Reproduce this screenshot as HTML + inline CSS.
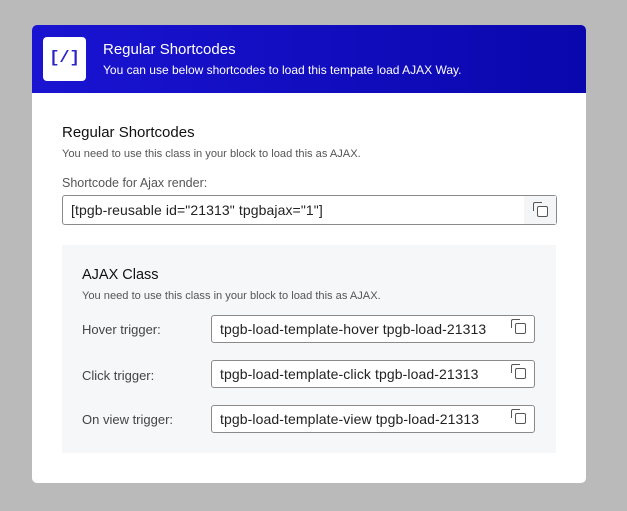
<!DOCTYPE html><html><head><style>
body{margin:0;width:627px;height:511px;background:#b9bab9;font-family:"Liberation Sans",sans-serif;position:relative;overflow:hidden}
.m{position:absolute;left:32px;top:25px;width:554px;height:458px;background:#fff;border-radius:5px;overflow:hidden}
.h{height:68px;background:linear-gradient(90deg,#1a14d2,#0a07ad);position:relative;color:#fff}
.logo{position:absolute;left:11px;top:12px;width:43px;height:44px;background:#fff;border-radius:4px;color:#2a23c8;font:bold 17px "Liberation Mono",monospace;text-align:center;line-height:44px}
.t1{position:absolute;left:71px;top:16px;font-size:15px}
.t2{position:absolute;left:71px;top:38px;font-size:12px}
.a{position:absolute}
.in{position:absolute;border:1px solid #8a8a8a;border-radius:3px;background:#fff;font-size:14px;color:#222;box-sizing:border-box;padding-left:8px;line-height:26px;letter-spacing:0.1px}
.cp{position:absolute;right:8px;top:7px;width:9px;height:9px;border:1.5px solid #555;border-radius:2px;background:#fff}
.cp:before{content:"";position:absolute;left:-5px;top:-5px;width:8px;height:8px;border-left:1.5px solid #555;border-top:1.5px solid #555;border-radius:2px 0 0 0}
.lb{position:absolute;font-size:13px;color:#444}
.s{font-size:11.1px;color:#555}
</style></head><body>
<div class="m">
<div class="h"><div class="logo">[/]</div><div class="t1">Regular Shortcodes</div><div class="t2">You can use below shortcodes to load this tempate load AJAX Way.</div></div>
<div class="a" style="left:30px;top:99px;font-size:15px;color:#111">Regular Shortcodes</div>
<div class="a s" style="left:30px;top:123px">You need to use this class in your block to load this as AJAX.</div>
<div class="a" style="left:30px;top:151px;font-size:12.5px;color:#555">Shortcode for Ajax render:</div>
<div class="in" style="left:30px;top:170px;width:495px;height:30px;line-height:28px">[tpgb-reusable id="21313" tpgbajax="1"]<div style="position:absolute;right:0;top:0;width:32px;height:28px;background:#f4f5f7"></div><div class="cp" style="top:10px"></div></div>
<div class="a" style="left:30px;top:220px;width:494px;height:208px;background:#f6f7f9"></div>
<div class="a" style="left:50px;top:242px;font-size:14.5px;color:#111">AJAX Class</div>
<div class="a s" style="left:50px;top:265px">You need to use this class in your block to load this as AJAX.</div>
<div class="lb" style="left:50px;top:297px">Hover trigger:</div>
<div class="in" style="left:179px;top:290px;width:324px;height:28px">tpgb-load-template-hover tpgb-load-21313<div class="cp"></div></div>
<div class="lb" style="left:50px;top:343px">Click trigger:</div>
<div class="in" style="left:179px;top:335px;width:324px;height:28px">tpgb-load-template-click tpgb-load-21313<div class="cp"></div></div>
<div class="lb" style="left:50px;top:387px">On view trigger:</div>
<div class="in" style="left:179px;top:380px;width:324px;height:28px">tpgb-load-template-view tpgb-load-21313<div class="cp"></div></div>
</div>
</body></html>
